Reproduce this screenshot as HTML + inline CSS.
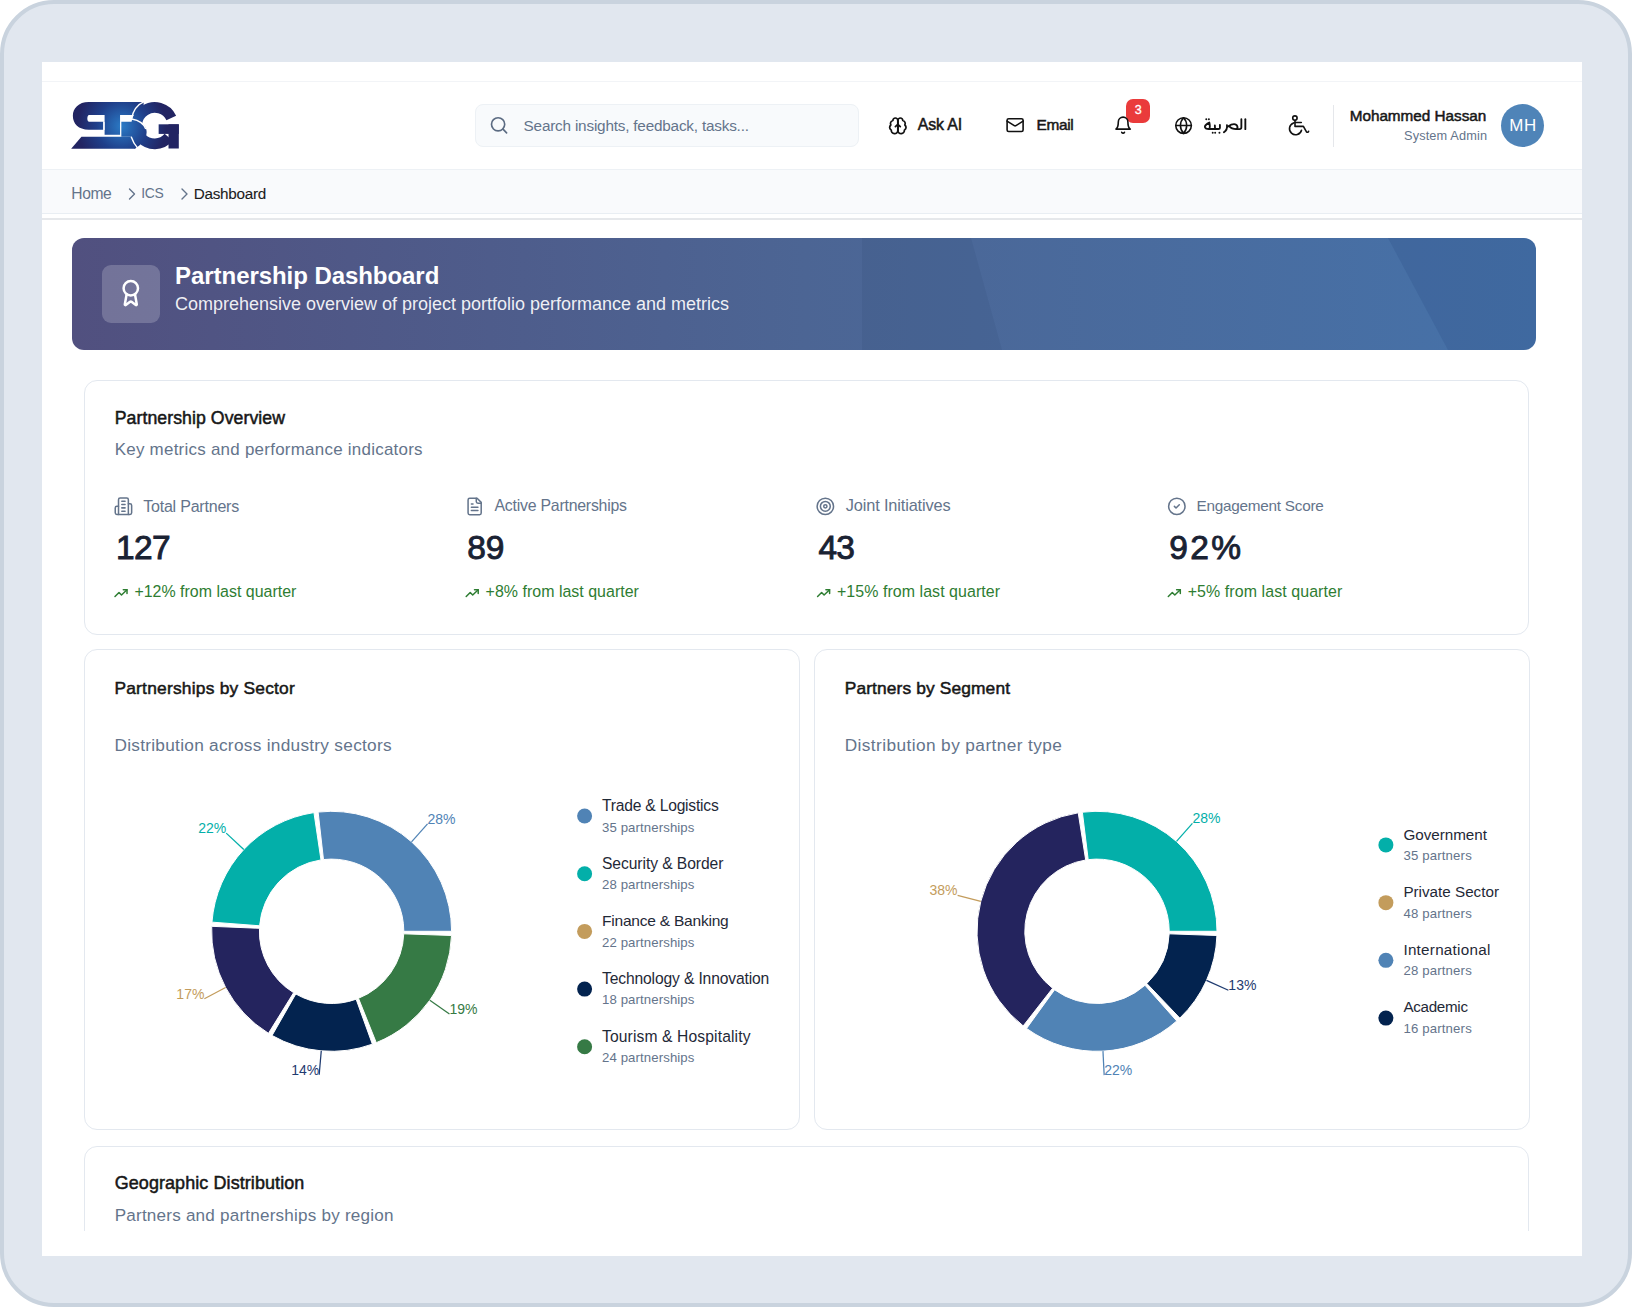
<!DOCTYPE html>
<html><head><meta charset="utf-8">
<style>
html,body{margin:0;padding:0;background:#fff;width:1632px;height:1307px;overflow:hidden;}
body{position:relative;font-family:"Liberation Sans",sans-serif;}
.frame{position:absolute;left:0;top:0;width:1624px;height:1299px;border:4px solid #c9d3de;border-radius:54px;background:#e1e7ef;}
.win{position:absolute;left:42px;top:62px;width:1540px;height:1194px;background:#fff;overflow:hidden;}
.t{position:absolute;white-space:pre;line-height:1;font-family:"Liberation Sans",sans-serif;}
.abs{position:absolute;}
.card{position:absolute;box-sizing:border-box;border:1px solid #e3e8ef;border-radius:13px;background:#fff;}
</style></head>
<body>
<div class="frame"></div>
<div class="win">
  <!-- top faint line -->
  <div class="abs" style="left:0;top:19px;width:1540px;height:1px;background:#f2f4f7"></div>
  <!-- header bottom border -->
  <div class="abs" style="left:0;top:107px;width:1540px;height:1px;background:#edf1f5"></div>
  <!-- breadcrumb bar -->
  <div class="abs" style="left:0;top:108px;width:1540px;height:43px;background:#f9fafc"></div>
  <div class="abs" style="left:0;top:151px;width:1540px;height:1px;background:#e9eef3"></div>
  <div class="abs" style="left:0;top:156px;width:1540px;height:2px;background:#e6e8eb"></div>
  <!-- search box -->
  <div class="abs" style="left:433px;top:42px;width:382px;height:41px;border:1px solid #edf1f5;border-radius:8px;background:#f8fafc"></div>
  <!-- divider -->
  <div class="abs" style="left:1291px;top:43px;width:1px;height:42px;background:#e5e7eb"></div>
  <!-- avatar -->
  <div class="abs" style="left:1459.4px;top:42px;width:43px;height:43px;border-radius:50%;background:#4f84b8"></div>
  <!-- badge -->
  <div class="abs" style="left:1084.3px;top:37px;width:24px;height:24px;border-radius:7px;background:#ea3b3b"></div>
  <!-- banner -->
  <div class="abs" style="left:30px;top:176px;width:1464px;height:112px;border-radius:12px;overflow:hidden;background:linear-gradient(90deg,#51507f 0%,#4c6594 50%,#4672a9 100%)">
    <svg width="1464" height="112" style="position:absolute;left:0;top:0">
      <polygon points="790,0 899,0 930,112 790,112" fill="#2a3f6e" opacity="0.12"/>
      <polygon points="1316,0 1464,0 1464,112 1376,112" fill="#20407a" opacity="0.18"/>
    </svg>
    <div class="abs" style="left:30px;top:27px;width:57.5px;height:57.5px;border-radius:9px;background:rgba(255,255,255,0.2)"></div>
  </div>
  <!-- cards -->
  <div class="card" style="left:42px;top:318px;width:1445px;height:255px"></div>
  <div class="card" style="left:42px;top:587px;width:716px;height:481px"></div>
  <div class="card" style="left:771.7px;top:587px;width:716px;height:481px"></div>
  <div class="abs" style="left:0;top:1084px;width:1540px;height:85px;overflow:hidden">
    <div class="card" style="left:42px;top:0;width:1445px;height:200px"></div>
  </div>
</div>
<!-- full-page overlay svg for icons & charts (page coords) -->
<svg class="abs" style="left:0;top:0" width="1632" height="1307" viewBox="0 0 1632 1307">
  <defs>
    <radialGradient id="lg" gradientUnits="userSpaceOnUse" cx="720" cy="420" r="650">
      <stop offset="0" stop-color="#2b7bc6"/>
      <stop offset="0.45" stop-color="#1f3f8a"/>
      <stop offset="0.8" stop-color="#222462"/>
      <stop offset="1" stop-color="#222462"/>
    </radialGradient>
  </defs>
  <!-- logo (coords from zoom of region 60,90 scale 11.657) -->
  <g transform="translate(60,90) scale(0.08578)">
    <g fill="url(#lg)">
      <path d="M975,140 L335,140 C215,140 150,215 150,300 C150,395 215,462 335,462 L505,462 L505,370 L340,370 C312,370 312,290 340,290 L975,290 Z"/>
      <rect x="520" y="290" width="180" height="232"/>
      <path d="M250,545 L835,545 L880,685 L130,685 Z"/>
      <path d="M715,370 L860,370 C960,370 1010,425 1010,490 C1010,570 950,640 870,685 L835,545 L715,545 Z"/>
    </g>
    <g fill="none" stroke="url(#lg)">
      <path d="M1297.1,325.4 A212,212 0 1 0 1267.4,551.3" stroke-width="125"/>
    </g>
    <g fill="url(#lg)">
      <rect x="1150" y="400" width="235" height="112"/>
      <rect x="1265" y="400" width="120" height="282"/>
    </g>
    <g fill="none" stroke="#fff" stroke-width="16">
      <path d="M985,132 C900,170 850,240 835,335"/>
      <path d="M836,338 C900,350 975,380 1000,455"/>
      <path d="M830,545 C850,610 880,650 915,690"/>
      <path d="M512,372 L512,465"/>
    </g>
  </g>
  <!-- search icon -->
  <g fill="none" stroke="#5b6b82" stroke-width="1.65" stroke-linecap="round">
    <circle cx="498.1" cy="124.3" r="6.6"/>
    <path d="M503,129.2 L506.6,132.8"/>
  </g>
  <!-- brain icon -->
  <g transform="translate(888,116.5) scale(0.82,0.78)" fill="none" stroke="#111" stroke-width="2.1" stroke-linecap="round" stroke-linejoin="round">
    <path d="M12 5a3 3 0 1 0-5.997.125 4 4 0 0 0-2.526 5.77 4 4 0 0 0 .556 6.588A4 4 0 1 0 12 18Z"/>
    <path d="M12 5a3 3 0 1 1 5.997.125 4 4 0 0 1 2.526 5.77 4 4 0 0 1-.556 6.588A4 4 0 1 1 12 18Z"/>
    <path d="M12 5v13"/><path d="M9 13l3-3 3 3"/>
  </g>
  <!-- mail icon -->
  <g transform="translate(1005.5,115.5) scale(0.8)" fill="none" stroke="#111" stroke-width="2" stroke-linecap="round" stroke-linejoin="round">
    <rect x="2" y="4" width="20" height="16" rx="2"/>
    <path d="m22 7-8.97 5.7a1.94 1.94 0 0 1-2.06 0L2 7"/>
  </g>
  <!-- bell -->
  <g transform="translate(1113.5,115.5) scale(0.8)" fill="none" stroke="#111" stroke-width="2" stroke-linecap="round" stroke-linejoin="round">
    <path d="M6 8a6 6 0 0 1 12 0c0 7 3 9 3 9H3s3-2 3-9"/>
    <path d="M10.3 21a1.94 1.94 0 0 0 3.4 0"/>
  </g>
  <!-- globe -->
  <g transform="translate(1174.2,116.2) scale(0.78)" fill="none" stroke="#111" stroke-width="2" stroke-linecap="round" stroke-linejoin="round">
    <circle cx="12" cy="12" r="10"/>
    <path d="M12 2a14.5 14.5 0 0 0 0 20 14.5 14.5 0 0 0 0-20"/>
    <path d="M2 12h20"/>
  </g>
  <!-- arabic text approximation -->
  <g transform="translate(1200,112) scale(0.030637)" fill="none" stroke="#111" stroke-width="60" stroke-linecap="round" stroke-linejoin="round">
    <path d="M1480,235 L1480,560"/>
    <path d="M1350,235 L1350,500 C1350,545 1330,560 1290,560 L1190,560"/>
    <path d="M1190,560 C1250,530 1230,395 1110,395 C1020,395 960,440 900,480"/>
    <path d="M1190,560 C1100,555 1000,520 960,470"/>
    <path d="M880,430 C895,520 870,600 780,660"/>
    <path d="M650,420 L650,520 C650,545 630,555 600,555 L300,555"/>
    <path d="M485,440 L490,530"/>
    <path d="M300,555 C200,555 150,525 160,475 C170,425 250,370 305,345 C320,420 340,500 300,555"/>
  </g>
  <g transform="translate(1200,112) scale(0.030637)" fill="#111">
    <circle cx="205" cy="240" r="32"/><circle cx="290" cy="240" r="32"/>
    <circle cx="415" cy="680" r="32"/><circle cx="495" cy="680" r="32"/><circle cx="635" cy="680" r="32"/>
  </g>
  <!-- wheelchair -->
  <g fill="none" stroke="#111" stroke-width="1.6" stroke-linecap="round" stroke-linejoin="round">
    <circle cx="1294.9" cy="118.1" r="2.2"/>
    <path d="M1295,120.6 V126.4 H1303.4 L1306.5,131.9 C1307.3,132.6 1308.4,132.2 1308.6,131.3"/>
    <path d="M1294.9,122.5 H1301.3"/>
    <path d="M1293.6,122.9 A6.1,6.1 0 1 0 1301.5,130.2"/>
  </g>
  <!-- breadcrumb chevrons -->
  <g fill="none" stroke="#64748b" stroke-width="1.4" stroke-linecap="round" stroke-linejoin="round">
    <path d="M129.5,189 L134.5,194 L129.5,199"/>
    <path d="M182,189 L187,194 L182,199"/>
  </g>
  <!-- award icon in banner -->
  <g transform="translate(116.4,278.7) scale(1.2)" fill="none" stroke="#fff" stroke-width="2.1" stroke-linecap="round" stroke-linejoin="round">
    <path d="m15.477 12.89 1.515 8.526a.5.5 0 0 1-.81.47l-3.58-2.687a1 1 0 0 0-1.197 0l-3.586 2.686a.5.5 0 0 1-.81-.469l1.514-8.526"/>
    <circle cx="12" cy="8" r="6"/>
  </g>
  <!-- metric icons -->
  <g fill="none" stroke="#64748b" stroke-width="1.85" stroke-linecap="round" stroke-linejoin="round">
    <!-- building -->
    <g transform="translate(113.6,496.4) scale(0.82)">
      <path d="M6 22V4a2 2 0 0 1 2-2h8a2 2 0 0 1 2 2v18Z"/>
      <path d="M6 12H4a2 2 0 0 0-2 2v6a2 2 0 0 0 2 2h2"/>
      <path d="M18 9h2a2 2 0 0 1 2 2v9a2 2 0 0 1-2 2h-2"/>
      <path d="M10 6h4"/><path d="M10 10h4"/><path d="M10 14h4"/><path d="M10 18h4"/>
    </g>
    <!-- file text -->
    <g transform="translate(464.8,496.6) scale(0.82)">
      <path d="M15 2H6a2 2 0 0 0-2 2v16a2 2 0 0 0 2 2h12a2 2 0 0 0 2-2V7Z"/>
      <path d="M14 2v4a2 2 0 0 0 2 2h4"/>
      <path d="M10 9H8"/><path d="M16 13H8"/><path d="M16 17H8"/>
    </g>
    <!-- target -->
    <g transform="translate(815.5,496.5) scale(0.82)">
      <circle cx="12" cy="12" r="10"/><circle cx="12" cy="12" r="6"/><circle cx="12" cy="12" r="2"/>
    </g>
    <!-- circle check -->
    <g transform="translate(1167,496.5) scale(0.82)">
      <circle cx="12" cy="12" r="10"/><path d="m9 12 2 2 4-4"/>
    </g>
  </g>
  <!-- trend icons -->
  <g fill="none" stroke="#2e7d32" stroke-width="1.5" stroke-linecap="round" stroke-linejoin="round">
    <g transform="translate(114.5,589)"><path d="M0.5,7.5 L4.5,3.5 L7,6 L12.5,0.8"/><path d="M8.8,0.8 L12.5,0.8 L12.5,4.5"/></g>
    <g transform="translate(465.7,589)"><path d="M0.5,7.5 L4.5,3.5 L7,6 L12.5,0.8"/><path d="M8.8,0.8 L12.5,0.8 L12.5,4.5"/></g>
    <g transform="translate(817.1,589)"><path d="M0.5,7.5 L4.5,3.5 L7,6 L12.5,0.8"/><path d="M8.8,0.8 L12.5,0.8 L12.5,4.5"/></g>
    <g transform="translate(1167.8,589)"><path d="M0.5,7.5 L4.5,3.5 L7,6 L12.5,0.8"/><path d="M8.8,0.8 L12.5,0.8 L12.5,4.5"/></g>
  </g>
  <path d="M451.60,931.30 A120,120 0 0 0 318.11,812.06 L323.48,859.56 A72.2,72.2 0 0 1 403.80,931.30 Z" fill="#5083b5" stroke="#fff" stroke-width="1"/>
<path d="M411.54,841.80 L427.53,823.90" stroke="#5083b5" stroke-width="1.25" fill="none"/>
<text x="427.53" y="823.90" fill="#5083b5" text-anchor="start" font-family="Liberation Sans" font-size="14">28%</text>
<path d="M313.95,812.60 A120,120 0 0 0 211.95,922.14 L259.61,925.79 A72.2,72.2 0 0 1 320.98,859.89 Z" fill="#03afa9" stroke="#fff" stroke-width="1"/>
<path d="M243.78,849.52 L226.22,833.16" stroke="#03afa9" stroke-width="1.25" fill="none"/>
<text x="226.22" y="833.16" fill="#03afa9" text-anchor="end" font-family="Liberation Sans" font-size="14">22%</text>
<path d="M211.70,926.32 A120,120 0 0 0 268.46,1033.34 L293.61,992.70 A72.2,72.2 0 0 1 259.46,928.30 Z" fill="#24245e" stroke="#fff" stroke-width="1"/>
<path d="M225.58,987.52 L204.38,998.76" stroke="#c39c5c" stroke-width="1.25" fill="none"/>
<text x="204.38" y="998.76" fill="#c39c5c" text-anchor="end" font-family="Liberation Sans" font-size="14">17%</text>
<path d="M272.06,1035.49 A120,120 0 0 0 372.36,1044.16 L356.13,999.21 A72.2,72.2 0 0 1 295.78,993.99 Z" fill="#03234f" stroke="#fff" stroke-width="1"/>
<path d="M321.26,1050.85 L319.19,1074.76" stroke="#1f3b70" stroke-width="1.25" fill="none"/>
<text x="319.19" y="1074.76" fill="#1f3b70" text-anchor="end" font-family="Liberation Sans" font-size="14">14%</text>
<path d="M376.28,1042.67 A120,120 0 0 0 451.53,935.49 L403.76,933.82 A72.2,72.2 0 0 1 358.48,998.31 Z" fill="#367a45" stroke="#fff" stroke-width="1"/>
<path d="M429.81,1000.25 L449.46,1014.04" stroke="#367a45" stroke-width="1.25" fill="none"/>
<text x="449.46" y="1014.04" fill="#367a45" text-anchor="start" font-family="Liberation Sans" font-size="14">19%</text>
<path d="M1217.00,931.30 A120,120 0 0 0 1082.36,812.20 L1088.19,859.64 A72.2,72.2 0 0 1 1169.20,931.30 Z" fill="#03afa9" stroke="#fff" stroke-width="1"/>
<path d="M1176.51,841.42 L1192.41,823.44" stroke="#03afa9" stroke-width="1.25" fill="none"/>
<text x="1192.41" y="823.44" fill="#03afa9" text-anchor="start" font-family="Liberation Sans" font-size="14">28%</text>
<path d="M1078.21,812.78 A120,120 0 0 0 1023.20,1025.92 L1052.60,988.23 A72.2,72.2 0 0 1 1085.70,859.99 Z" fill="#24245e" stroke="#fff" stroke-width="1"/>
<path d="M980.81,901.31 L957.57,895.31" stroke="#c39c5c" stroke-width="1.25" fill="none"/>
<text x="957.57" y="895.31" fill="#c39c5c" text-anchor="end" font-family="Liberation Sans" font-size="14">38%</text>
<path d="M1026.55,1028.44 A120,120 0 0 0 1176.75,1020.96 L1144.99,985.25 A72.2,72.2 0 0 1 1054.61,989.75 Z" fill="#5083b5" stroke="#fff" stroke-width="1"/>
<path d="M1102.97,1051.15 L1104.16,1075.12" stroke="#5083b5" stroke-width="1.25" fill="none"/>
<text x="1104.16" y="1075.12" fill="#5083b5" text-anchor="start" font-family="Liberation Sans" font-size="14">22%</text>
<path d="M1179.84,1018.12 A120,120 0 0 0 1216.93,935.49 L1169.16,933.82 A72.2,72.2 0 0 1 1146.84,983.54 Z" fill="#03234f" stroke="#fff" stroke-width="1"/>
<path d="M1206.48,980.44 L1228.37,990.27" stroke="#1f3b70" stroke-width="1.25" fill="none"/>
<text x="1228.37" y="990.27" fill="#1f3b70" text-anchor="start" font-family="Liberation Sans" font-size="14">13%</text>
<circle cx="584.6" cy="816.00" r="7.5" fill="#5083b5"/>
<circle cx="584.6" cy="873.70" r="7.5" fill="#03afa9"/>
<circle cx="584.6" cy="931.40" r="7.5" fill="#c39c5c"/>
<circle cx="584.6" cy="989.10" r="7.5" fill="#03234f"/>
<circle cx="584.6" cy="1046.80" r="7.5" fill="#367a45"/>
<circle cx="1385.9" cy="844.90" r="7.5" fill="#03afa9"/>
<circle cx="1385.9" cy="902.63" r="7.5" fill="#c39c5c"/>
<circle cx="1385.9" cy="960.36" r="7.5" fill="#5083b5"/>
<circle cx="1385.9" cy="1018.09" r="7.5" fill="#03234f"/>
</svg>
<div class="t" style="left:523.60px;top:117.75px;font-size:15.30px;font-weight:400;color:#64748b;letter-spacing:-0.199px;">Search insights, feedback, tasks...</div>
<div class="t" style="left:917.80px;top:117.01px;font-size:15.94px;font-weight:400;color:#171717;letter-spacing:-0.138px;-webkit-text-stroke:0.5px #171717;">Ask AI</div>
<div class="t" style="left:1036.40px;top:117.46px;font-size:15.41px;font-weight:400;color:#171717;letter-spacing:-0.280px;-webkit-text-stroke:0.5px #171717;">Email</div>
<div class="t" style="left:1349.70px;top:107.65px;font-size:15.30px;font-weight:400;color:#171717;letter-spacing:-0.021px;-webkit-text-stroke:0.5px #171717;">Mohammed Hassan</div>
<div class="t" style="left:1404.00px;top:130.20px;font-size:12.75px;font-weight:400;color:#64748b;letter-spacing:0.136px;">System Admin</div>
<div class="t" style="left:1509.20px;top:117.55px;font-size:16.96px;font-weight:400;color:#fff;letter-spacing:0.656px;">MH</div>
<div class="t" style="left:1134.82px;top:103.92px;font-size:12.50px;font-weight:400;color:#fff;letter-spacing:0.000px;-webkit-text-stroke:0.3px #fff;">3</div>
<div class="t" style="left:71.25px;top:185.71px;font-size:15.64px;font-weight:400;color:#64748b;letter-spacing:-0.405px;">Home</div>
<div class="t" style="left:141.25px;top:187.18px;font-size:13.90px;font-weight:400;color:#64748b;letter-spacing:-0.337px;">ICS</div>
<div class="t" style="left:193.75px;top:186.03px;font-size:15.27px;font-weight:400;color:#1c1c1c;letter-spacing:-0.272px;-webkit-text-stroke:0.1px #1c1c1c;">Dashboard</div>
<div class="t" style="left:175.10px;top:264.08px;font-size:24.00px;font-weight:700;color:#fff;letter-spacing:-0.060px;">Partnership Dashboard</div>
<div class="t" style="left:175.10px;top:295.16px;font-size:18.00px;font-weight:400;color:rgba(255,255,255,0.92);letter-spacing:-0.007px;">Comprehensive overview of project portfolio performance and metrics</div>
<div class="t" style="left:114.70px;top:410.33px;font-size:17.68px;font-weight:400;color:#171717;letter-spacing:0.072px;-webkit-text-stroke:0.5px #171717;">Partnership Overview</div>
<div class="t" style="left:114.70px;top:442.25px;font-size:16.96px;font-weight:400;color:#64748b;letter-spacing:0.256px;">Key metrics and performance indicators</div>
<div class="t" style="left:143.20px;top:497.72px;font-size:16.04px;font-weight:400;color:#64748b;letter-spacing:-0.222px;">Total Partners</div>
<div class="t" style="left:116.00px;top:531.44px;font-size:33.50px;font-weight:400;color:#1a2233;letter-spacing:-0.653px;-webkit-text-stroke:0.9px #1a2233;">127</div>
<div class="t" style="left:134.40px;top:584.31px;font-size:15.94px;font-weight:400;color:#2e7d32;letter-spacing:0.016px;">+12% from last quarter</div>
<div class="t" style="left:494.40px;top:497.88px;font-size:15.86px;font-weight:400;color:#64748b;letter-spacing:-0.221px;">Active Partnerships</div>
<div class="t" style="left:467.20px;top:531.44px;font-size:33.50px;font-weight:400;color:#1a2233;letter-spacing:-0.066px;-webkit-text-stroke:0.9px #1a2233;">89</div>
<div class="t" style="left:485.60px;top:584.31px;font-size:15.94px;font-weight:400;color:#2e7d32;letter-spacing:0.024px;">+8% from last quarter</div>
<div class="t" style="left:845.80px;top:497.44px;font-size:16.38px;font-weight:400;color:#64748b;letter-spacing:-0.156px;">Joint Initiatives</div>
<div class="t" style="left:818.60px;top:531.44px;font-size:33.50px;font-weight:400;color:#1a2233;letter-spacing:-0.966px;-webkit-text-stroke:0.9px #1a2233;">43</div>
<div class="t" style="left:837.00px;top:584.31px;font-size:15.94px;font-weight:400;color:#2e7d32;letter-spacing:0.063px;">+15% from last quarter</div>
<div class="t" style="left:1196.50px;top:498.33px;font-size:15.32px;font-weight:400;color:#64748b;letter-spacing:-0.254px;">Engagement Score</div>
<div class="t" style="left:1169.30px;top:531.44px;font-size:33.50px;font-weight:400;color:#1a2233;letter-spacing:2.319px;-webkit-text-stroke:0.9px #1a2233;">92%</div>
<div class="t" style="left:1187.70px;top:584.31px;font-size:15.94px;font-weight:400;color:#2e7d32;letter-spacing:0.089px;">+5% from last quarter</div>
<div class="t" style="left:114.40px;top:679.68px;font-size:17.39px;font-weight:400;color:#171717;letter-spacing:0.221px;-webkit-text-stroke:0.5px #171717;">Partnerships by Sector</div>
<div class="t" style="left:114.40px;top:737.10px;font-size:17.25px;font-weight:400;color:#64748b;letter-spacing:0.279px;">Distribution across industry sectors</div>
<div class="t" style="left:844.70px;top:679.68px;font-size:17.39px;font-weight:400;color:#171717;letter-spacing:0.116px;-webkit-text-stroke:0.5px #171717;">Partners by Segment</div>
<div class="t" style="left:844.70px;top:737.10px;font-size:17.25px;font-weight:400;color:#64748b;letter-spacing:0.412px;">Distribution by partner type</div>
<div class="t" style="left:602.00px;top:797.95px;font-size:15.65px;font-weight:400;color:#1f2937;letter-spacing:-0.217px;">Trade &amp; Logistics</div>
<div class="t" style="left:602.00px;top:820.64px;font-size:13.19px;font-weight:400;color:#64748b;letter-spacing:0.107px;">35 partnerships</div>
<div class="t" style="left:602.00px;top:855.60px;font-size:15.65px;font-weight:400;color:#1f2937;letter-spacing:-0.074px;">Security &amp; Border</div>
<div class="t" style="left:602.00px;top:878.19px;font-size:13.19px;font-weight:400;color:#64748b;letter-spacing:0.107px;">28 partnerships</div>
<div class="t" style="left:602.00px;top:913.33px;font-size:15.56px;font-weight:400;color:#1f2937;letter-spacing:-0.238px;">Finance &amp; Banking</div>
<div class="t" style="left:602.00px;top:935.74px;font-size:13.19px;font-weight:400;color:#64748b;letter-spacing:0.107px;">22 partnerships</div>
<div class="t" style="left:602.00px;top:970.90px;font-size:15.65px;font-weight:400;color:#1f2937;letter-spacing:-0.143px;">Technology &amp; Innovation</div>
<div class="t" style="left:602.00px;top:993.29px;font-size:13.19px;font-weight:400;color:#64748b;letter-spacing:0.107px;">18 partnerships</div>
<div class="t" style="left:602.00px;top:1028.55px;font-size:15.65px;font-weight:400;color:#1f2937;letter-spacing:0.123px;">Tourism &amp; Hospitality</div>
<div class="t" style="left:602.00px;top:1050.84px;font-size:13.19px;font-weight:400;color:#64748b;letter-spacing:0.107px;">24 partnerships</div>
<div class="t" style="left:1403.40px;top:826.52px;font-size:15.22px;font-weight:400;color:#1f2937;letter-spacing:-0.017px;">Government</div>
<div class="t" style="left:1403.40px;top:849.04px;font-size:13.19px;font-weight:400;color:#64748b;letter-spacing:0.166px;">35 partners</div>
<div class="t" style="left:1403.40px;top:884.12px;font-size:15.22px;font-weight:400;color:#1f2937;letter-spacing:0.001px;">Private Sector</div>
<div class="t" style="left:1403.40px;top:906.64px;font-size:13.19px;font-weight:400;color:#64748b;letter-spacing:0.166px;">48 partners</div>
<div class="t" style="left:1403.40px;top:941.72px;font-size:15.22px;font-weight:400;color:#1f2937;letter-spacing:0.259px;">International</div>
<div class="t" style="left:1403.40px;top:964.24px;font-size:13.19px;font-weight:400;color:#64748b;letter-spacing:0.166px;">28 partners</div>
<div class="t" style="left:1403.40px;top:999.36px;font-size:15.17px;font-weight:400;color:#1f2937;letter-spacing:-0.277px;">Academic</div>
<div class="t" style="left:1403.40px;top:1021.84px;font-size:13.19px;font-weight:400;color:#64748b;letter-spacing:0.166px;">16 partners</div>
<div class="t" style="left:114.70px;top:1174.99px;font-size:17.97px;font-weight:400;color:#171717;letter-spacing:0.092px;-webkit-text-stroke:0.5px #171717;">Geographic Distribution</div>
<div class="t" style="left:114.70px;top:1206.52px;font-size:17.10px;font-weight:400;color:#64748b;letter-spacing:0.207px;">Partners and partnerships by region</div>
</body></html>
